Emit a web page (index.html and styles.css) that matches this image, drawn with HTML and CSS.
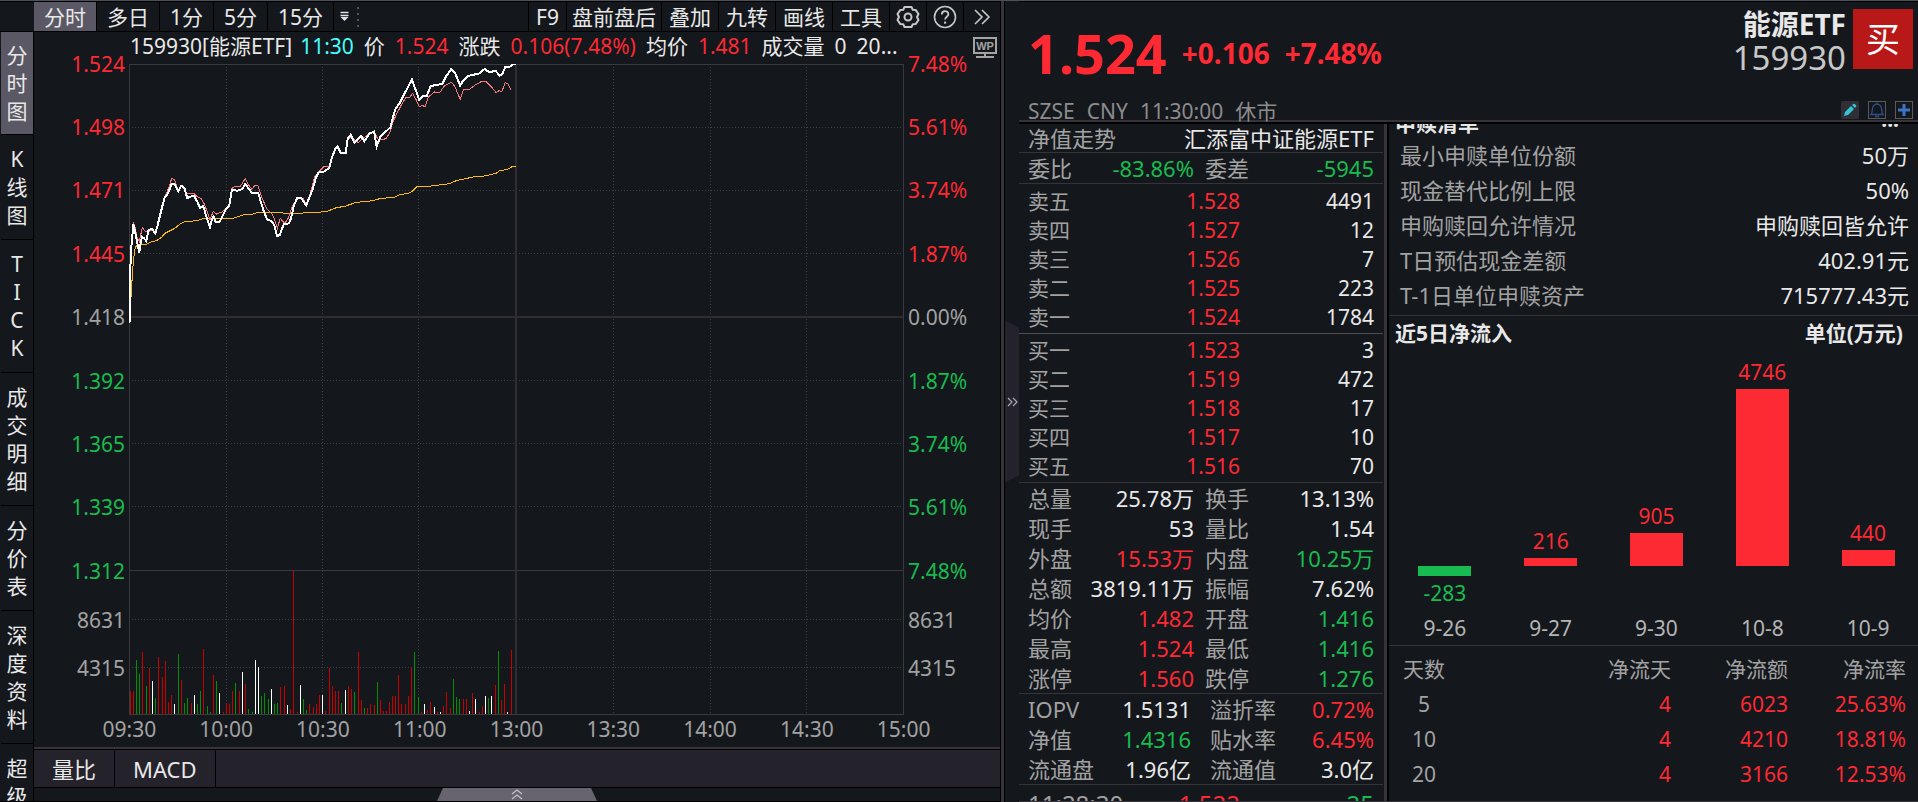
FILE: index.html
```html
<!DOCTYPE html>
<html lang="zh-CN">
<head>
<meta charset="utf-8">
<title>能源ETF 159930</title>
<link rel="stylesheet" href="styles.css">
</head>
<body>
<div class="app">
  <main class="chart-pane">
    <nav class="side-nav" aria-label="视图">
      <button class="side-tab active">分<br>时<br>图</button>
      <button class="side-tab">K<br>线<br>图</button>
      <button class="side-tab">T<br>I<br>C<br>K</button>
      <button class="side-tab">成<br>交<br>明<br>细</button>
      <button class="side-tab">分<br>价<br>表</button>
      <button class="side-tab">深<br>度<br>资<br>料</button>
      <button class="side-tab">超<br>级</button>
    </nav>
    <div class="toolbar">
      <button class="tool active">分时</button>
      <button class="tool">多日</button>
      <button class="tool">1分</button>
      <button class="tool">5分</button>
      <button class="tool">15分</button>
      <button class="tool-more" aria-label="更多周期">
        <svg width="14" height="20" viewBox="0 0 14 20"><path d="M2.500 5.500h8M2.500 8.500h8" stroke="#e2e2ee" stroke-width="1.500"/><path d="M2.500 10h8L6.500 14z" fill="#e2e2ee"/></svg>
        <svg width="4" height="22" viewBox="0 0 4 22"><path d="M2 1v21" stroke="#55565c" stroke-width="2" stroke-dasharray="2 4"/></svg>
      </button>
      <div class="tool-group">
        <button class="tool slim">F9</button>
        <button class="tool tight">盘前盘后</button>
        <button class="tool slim">叠加</button>
        <button class="tool slim">九转</button>
        <button class="tool slim">画线</button>
        <button class="tool slim">工具</button>
        <button class="tool icon" aria-label="设置">
          <svg width="24" height="24" viewBox="0 0 24 24" fill="none" stroke="#c8c8c8" stroke-width="2" stroke-linejoin="round"><path d="M8.500 2h7l1.300 2.800 3 .3L22.500 9 21 12l1.500 3-2.700 3.900-3 .3L15.500 22h-7l-1.300-2.800-3-.3L1.500 15 3 12 1.500 9l2.700-3.900 3-.3z"/><circle cx="12" cy="12" r="3.500"/></svg>
        </button>
        <button class="tool icon" aria-label="帮助">
          <svg width="24" height="24" viewBox="0 0 24 24" fill="none" stroke="#c8c8c8" stroke-width="1.600"><circle cx="12" cy="12" r="10.500"/><path d="M8.800 9.600c0-4.600 6.600-4.300 6.600-.4 0 2.400-3.300 2.700-3.300 5.300" stroke-width="1.800"/><path d="M12.100 16.500v2.200" stroke-width="2"/></svg>
        </button>
        <button class="tool icon last" aria-label="展开">
          <svg width="18" height="18" viewBox="0 0 18 18" fill="none" stroke="#c8c8c8" stroke-width="1.600"><path d="M2 2l7 7-7 7M9 2l7 7-7 7"/></svg>
        </button>
      </div>
    </div>

    <section class="chart">
      <div class="axis left">
        <span class="up">1.524</span><span class="up">1.498</span><span class="up">1.471</span><span class="up">1.445</span><span>1.418</span><span class="down">1.392</span><span class="down">1.365</span><span class="down">1.339</span><span class="down">1.312</span><span>8631</span><span>4315</span>
      </div>
      <div class="info">
        <span class="pair"><span>159930[能源ETF]</span><span class="clock">11:30</span></span>
        <span>价</span><span class="up">1.524</span><span>涨跌</span><span class="up">0.106(7.48%)</span><span>均价</span><span class="up">1.481</span><span>成交量</span><span>0</span><span>20...</span>
      </div>
      <svg class="plot" viewBox="27 42 2328 1953" preserveAspectRatio="none">
        <g class="dots">
          <path d="M27 232H2352M27 421H2352M27 610H2352M27 991H2352M27 1180H2352M27 1369H2352M27 1708H2352M27 1852H2352"/>
          <path d="M319 43V1992M607 43V1992M898 43V1992M1483 43V1992M1774 43V1992M2062 43V1992"/>
        </g>
        <path class="frame" d="M28 43H2353V1993H28ZM28 1561H2353"/>
        <path class="frame thick" d="M28 801H2353M1188 43V1993"/>
        <g class="bars" transform="translate(-360 1050)">
          <path class="b-up" d="M391 942V873M400 942V873M427 942V756M448 942V804M475 942V771M487 942V831M496 942V783M505 942V906M514 942V885M544 942V840M574 942V909M610 942V747M640 942V825M670 942V936M679 942V910M688 942V911M697 942V873M718 942V873M736 942V852M841 942V861M853 942V858M871 942V927M880 942V513M892 942V936M928 942V911M940 942V920M949 942V911M958 942V885M976 942V933M988 942V804M997 942V858M1006 942V873M1015 942V873M1045 942V858M1054 942V867M1075 942V756M1084 942V900M1102 942V924M1111 942V911M1123 942V915M1141 942V900M1150 942V933M1159 942V933M1171 942V906M1180 942V888M1189 942V888M1198 942V825M1207 942V911M1219 942V911M1228 942V888M1237 942V804M1267 942V936M1285 942V930M1294 942V906M1315 942V936M1333 942V918M1342 942V876M1354 942V924M1393 942V897M1402 942V897M1420 942V879M1441 942V936M1450 942V918M1489 942V855M1507 942V900M1516 942V852M1537 942V750"/>
          <path class="b-down" d="M409 942V780M418 942V822M439 942V858M466 942V894M535 942V762M553 942V909M562 942V894M592 942V912M601 942V873M622 942V918M631 942V936M649 942V843M706 942V849M745 942V927M757 942V936M784 942V888M793 942V879M805 942V897M823 942V912M832 942V909M910 942V897M919 942V930M1024 942V909M1063 942V876M1093 942V924M1132 942V846M1246 942V756M1258 942V891M1363 942V837M1372 942V891M1381 942V897M1468 942V894M1498 942V753"/>
          <path class="b-flat" d="M457 942V843M523 942V912M583 942V885M658 942V879M727 942V816M766 942V780M775 942V801M814 942V867M862 942V915M901 942V855M967 942V885M1036 942V870M1276 942V912M1306 942V921M1324 942V936M1411 942V933M1429 942V897M1459 942V888M1477 942V888M1525 942V936"/>
        </g>
        <g class="avg">
          <polyline points="33,742 38,660 44,600 50,585 78,583 95,575 110,572 125,562 135,550 165,535 180,522 195,515 230,512 250,506 340,505 375,493 400,492 415,487 480,487 495,490 545,490 560,487 605,486 620,485 650,473 675,469 710,457 760,452 780,446 825,441 840,434 865,430 878,424 892,409 925,409 990,401 1010,392 1070,379 1095,378 1130,370 1140,362 1165,358 1178,350 1188,349"/>
        </g>
        <g class="iopv">
          <polyline points="33,600 37,540 40,515 46,535 52,565 58,575 67,532 75,543 84,548 95,540 106,548 120,497 135,440 148,410 155,385 163,388 175,420 184,407 202,430 222,430 232,440 243,445 252,460 262,485 270,510 280,484 290,492 308,485 328,466 336,415 345,410 362,408 376,386 385,403 396,418 405,406 415,408 425,440 440,475 455,490 463,505 473,535 481,505 495,520 505,505 515,475 530,447 550,445 559,462 570,435 585,380 596,366 612,350 628,350 645,300 654,290 662,306 678,308 684,268 693,262 704,270 716,278 730,265 750,250 763,245 775,268 786,270 800,265 812,245 820,215 832,190 845,165 858,143 870,142 879,130 890,150 899,171 908,165 916,171 927,140 945,126 960,128 975,107 995,97 1005,108 1022,148 1032,118 1050,118 1070,103 1085,95 1100,95 1115,110 1130,128 1138,122 1147,125 1157,98 1165,102 1175,122"/>
        </g>
        <g class="price-line">
          <polyline points="27,816 29,815 30,690 33,600 37,560 40,522 45,545 50,570 58,608 62,580 66,560 72,565 79,573 86,540 96,537 106,550 112,530 120,497 128,465 135,440 142,434 148,420 155,402 163,401 175,425 184,407 193,413 202,444 212,440 222,437 232,455 240,474 250,468 258,495 270,531 275,512 281,500 287,515 299,515 308,497 318,478 328,468 336,420 352,422 368,417 376,402 384,412 396,428 415,428 425,462 432,485 442,508 452,512 463,524 472,558 480,555 492,522 508,520 515,500 522,468 532,444 544,444 552,455 559,466 568,445 578,420 588,385 596,368 612,365 628,355 636,325 646,298 654,290 662,308 678,310 684,265 693,254 704,278 712,270 724,258 734,273 750,250 763,245 771,289 782,260 812,232 822,195 828,175 840,160 855,130 877,89 899,150 910,139 922,137 933,108 968,102 980,78 995,57 1008,72 1022,107 1030,92 1045,78 1080,70 1095,57 1110,67 1128,62 1140,77 1148,73 1157,52 1170,50 1182,43 1188,43"/>
        </g>
      </svg>
      <div class="axis right">
        <span class="up">7.48%</span><span class="up">5.61%</span><span class="up">3.74%</span><span class="up">1.87%</span><span>0.00%</span><span class="down">1.87%</span><span class="down">3.74%</span><span class="down">5.61%</span><span class="down">7.48%</span><span>8631</span><span>4315</span>
      </div>
      <button class="wp" aria-label="WP">
        <svg width="26" height="24" viewBox="0 0 26 24"><path d="M2 2h22v15H2z" fill="none" stroke="#a4a4a4" stroke-width="2"/><path d="M12 17h2v3h-2zM4 20h18v2H4z" fill="#a4a4a4"/><text x="13" y="14" text-anchor="middle" class="wp-text">WP</text></svg>
      </button>
      <div class="times">
        <span>09:30</span><span>10:00</span><span>10:30</span><span>11:00</span><span>13:00</span><span>13:30</span><span>14:00</span><span>14:30</span><span>15:00</span>
      </div>
    </section>

    <div class="indicators">
      <button class="indicator">量比</button>
      <button class="indicator">MACD</button>
    </div>
    <div class="drawer">
      <button class="drawer-handle" aria-label="展开下方面板">
        <svg width="12" height="11" viewBox="0 0 12 11" fill="none" stroke="#c4c2cc" stroke-width="1.200"><path d="M1 5l5-4 5 4M1 10l5-4 5 4"/></svg>
      </button>
    </div>
  </main>

  <div class="splitter"></div>
  <div class="gutter">
    <button class="gutter-handle" aria-label="收起右侧面板">
      <svg width="11" height="10" viewBox="0 0 11 10" fill="none" stroke="#a9a9ae" stroke-width="1.200"><path d="M1 1l4 4-4 4M6 1l4 4-4 4"/></svg>
    </button>
  </div>

  <aside class="info-pane">
    <header class="quote-head">
      <div class="quote-main">
        <div class="quote-price"><strong class="last">1.524</strong><strong class="chg">+0.106</strong><strong class="chg">+7.48%</strong></div>
        <div class="quote-meta"><span>SZSE</span><span>CNY</span><span>11:30:00</span><span>休市</span></div>
      </div>
      <div class="quote-side">
        <div class="ident">
          <div class="names"><h1 class="name">能源ETF</h1><span class="code">159930</span></div>
          <button class="buy">买</button>
        </div>
        <div class="actions">
          <button class="act filled" aria-label="编辑"><svg width="18" height="18" viewBox="0 0 18 18"><path d="M3 15l1-4 6-6 3 3-6 6zM11 4l1.500-1.200 1.200.2 1.500 1.600v1L14 7z" fill="#35c3d6"/></svg></button>
          <button class="act" aria-label="提醒"><svg width="18" height="18" viewBox="0 0 18 18" fill="none" stroke="#2f4f8a" stroke-width="1.300"><path d="M9 1.500v1.500M3 13.500c1.500-1.500 1-4 1.500-6C5 4.700 7 3.200 9 3.200s4 1.500 4.500 4.300c.5 2 0 4.500 1.500 6zM7 15.500h4"/></svg></button>
          <button class="act" aria-label="添加"><svg width="18" height="18" viewBox="0 0 18 18"><path d="M9 3v12M3 9h12" stroke="#3d72c4" stroke-width="3"/></svg></button>
        </div>
      </div>
    </header>

    <div class="columns">
      <section class="book">
        <div class="fund"><span class="muted">净值走势</span><span>汇添富中证能源ETF</span></div>
        <div class="stats ruled"><span>委比</span><b class="down">-83.86%</b><span>委差</span><b class="down">-5945</b></div>
        <table class="depth asks">
          <tr><th>卖五</th><td class="up">1.528</td><td>4491</td></tr>
          <tr><th>卖四</th><td class="up">1.527</td><td>12</td></tr>
          <tr><th>卖三</th><td class="up">1.526</td><td>7</td></tr>
          <tr><th>卖二</th><td class="up">1.525</td><td>223</td></tr>
          <tr><th>卖一</th><td class="up">1.524</td><td>1784</td></tr>
        </table>
        <table class="depth bids">
          <tr><th>买一</th><td class="up">1.523</td><td>3</td></tr>
          <tr><th>买二</th><td class="up">1.519</td><td>472</td></tr>
          <tr><th>买三</th><td class="up">1.518</td><td>17</td></tr>
          <tr><th>买四</th><td class="up">1.517</td><td>10</td></tr>
          <tr><th>买五</th><td class="up">1.516</td><td>70</td></tr>
        </table>
        <div class="stats ruled">
          <span>总量</span><b>25.78万</b><span>换手</span><b>13.13%</b>
          <span>现手</span><b>53</b><span>量比</span><b>1.54</b>
          <span>外盘</span><b class="up">15.53万</b><span>内盘</span><b class="down">10.25万</b>
          <span>总额</span><b>3819.11万</b><span>振幅</span><b>7.62%</b>
          <span>均价</span><b class="up">1.482</b><span>开盘</span><b class="down">1.416</b>
          <span>最高</span><b class="up">1.524</b><span>最低</span><b class="down">1.416</b>
          <span>涨停</span><b class="up">1.560</b><span>跌停</span><b class="down">1.276</b>
        </div>
        <div class="stats ruled wide">
          <span>IOPV</span><b>1.5131</b><span>溢折率</span><b class="up">0.72%</b>
          <span>净值</span><b class="down">1.4316</b><span>贴水率</span><b class="up">6.45%</b>
          <span>流通盘</span><b>1.96亿</b><span>流通值</span><b>3.0亿</b>
        </div>
        <div class="tick"><span class="muted">11:28:30</span><span class="up">1.522</span><span class="down">25</span></div>
      </section>

      <section class="etf">
        <div class="list-title"><h2>申赎清单</h2><span class="more">...</span></div>
        <dl class="list">
          <div><dt>最小申赎单位份额</dt><dd>50万</dd></div>
          <div><dt>现金替代比例上限</dt><dd>50%</dd></div>
          <div><dt>申购赎回允许情况</dt><dd>申购赎回皆允许</dd></div>
          <div><dt>T日预估现金差额</dt><dd>402.91元</dd></div>
          <div><dt>T-1日单位申赎资产</dt><dd>715777.43元</dd></div>
        </dl>
        <div class="flow-title"><h2>近5日净流入</h2><span>单位(万元)</span></div>
        <div class="flow">
          <div class="day"><div class="pos"></div><div class="neg"><i style="height:10px"></i><span>-283</span></div><em>9-26</em></div>
          <div class="day"><div class="pos"><span>216</span><i style="height:8px"></i></div><div class="neg"></div><em>9-27</em></div>
          <div class="day"><div class="pos"><span>905</span><i style="height:33px"></i></div><div class="neg"></div><em>9-30</em></div>
          <div class="day"><div class="pos"><span>4746</span><i style="height:177px"></i></div><div class="neg"></div><em>10-8</em></div>
          <div class="day"><div class="pos"><span>440</span><i style="height:16px"></i></div><div class="neg"></div><em>10-9</em></div>
        </div>
        <table class="net">
          <thead><tr><th>天数</th><th>净流天</th><th>净流额</th><th>净流率</th></tr></thead>
          <tbody>
            <tr><td>5</td><td>4</td><td>6023</td><td>25.63%</td></tr>
            <tr><td>10</td><td>4</td><td>4210</td><td>18.81%</td></tr>
            <tr><td>20</td><td>4</td><td>3166</td><td>12.53%</td></tr>
            <tr><td>60</td><td>16</td><td class="down">-1448</td><td class="down">-1.48%</td></tr>
          </tbody>
        </table>
      </section>
    </div>
  </aside>
</div>
</body>
</html>
```
FILE: styles.css
```css
:root {
  --bg: #14171c;
  --panel: #24222a;
  --line: #36343a;
  --rule: #333338;
  --up: #fd2933;
  --down: #18bb4f;
  --text: #e8e8e8;
  --muted: #a2a2a2;
}

* { box-sizing: border-box; }

body {
  margin: 0;
  background: var(--bg);
  color: var(--text);
  font-family: "Noto Sans", "Noto Sans CJK SC", sans-serif;
  font-size: 21px;
  line-height: 28px;
}

button {
  margin: 0;
  padding: 0;
  border: 0;
  background: none;
  color: inherit;
  font: inherit;
  cursor: pointer;
}

h1, h2, dl, dd { margin: 0; }
svg { display: block; }
table { border-collapse: collapse; width: 100%; }
th, td { padding: 0; font-weight: 400; text-align: right; }
.up { color: var(--up); }
.down { color: var(--down); }
.muted { color: var(--muted); }

.app {
  display: grid;
  grid-template-columns: 1001fr 4px 14px 899fr;
  height: 100vh;
  overflow: hidden;
  border-top: 1px solid #4b505c;
}

/* chart pane */
.chart-pane {
  display: grid;
  grid-template: 30px minmax(0, 1fr) 39px 13px / 34px minmax(0, 1fr);
  min-width: 0;
  min-height: 0;
  border-right: 1px solid #000;
  border-top: 1px solid #000;
  border-bottom: 1px solid #000;
}

.side-nav {
  grid-row: 2 / -1;
  display: flex;
  flex-direction: column;
  min-height: 0;
  overflow: hidden;
  margin-left: 1px;
  border-right: 1px solid #000;
}
.side-tab {
  flex: none;
  padding: 10px 0;
  border-bottom: 1px solid #000;
}
.side-tab.active { padding: 9px 0; background: #5b5865; }

.toolbar {
  grid-column: 1 / -1;
  display: flex;
  padding-left: 34px;
  border-bottom: 1px solid #000;
}
.tool {
  padding: 0 10px;
  border-right: 1px solid #000;
  white-space: nowrap;
}
.tool.active { background: #5b5865; }
.tool.slim { padding: 0 7px; }
.tool.tight { padding: 0 5px; }
.tool.icon { display: flex; align-items: center; padding: 0 6px; }
.tool.icon.last { padding: 0 9px; border-right: 0; }
.tool-more { display: flex; align-items: center; gap: 4px; padding-left: 4px; }
.tool-group { display: flex; margin-left: auto; border-left: 1px solid #000; }

.chart {
  display: grid;
  grid-template: 32px minmax(0, 1fr) 32px / 95px minmax(0, 1fr) 68px 28px;
  min-height: 0;
  border-bottom: 2px solid var(--line);
}
.axis {
  grid-row: 1 / 3;
  display: grid;
  grid-template-rows: repeat(9, 1265fr) 720fr 1200fr 330fr;
  align-items: center;
  color: var(--muted);
}
.axis.left { grid-column: 1; text-align: right; padding-right: 4px; }
.axis.right { grid-column: 3; padding-left: 4px; }
.axis .up { color: var(--up); }
.axis .down { color: var(--down); }
.info {
  grid-area: 1 / 2;
  display: flex;
  gap: 10px;
  padding-left: 1px;
  white-space: nowrap;
}
.pair { display: flex; gap: 8px; }
.clock { color: #45ffff; }
.plot { grid-area: 2 / 2; width: 100%; height: 100%; }
.plot * { vector-effect: non-scaling-stroke; fill: none; shape-rendering: crispEdges; }
.dots path { stroke: #3c3e43; stroke-width: 1; stroke-dasharray: 1 2; }
.frame { stroke: #3a393e; stroke-width: 1; }
.frame.thick { stroke: #2f2d32; stroke-width: 2; }
.b-up { stroke: #c80000; }
.b-down { stroke: #009000; }
.b-flat { stroke: #fff; }
.avg polyline { stroke: #fdb913; }
.iopv polyline { stroke: #f27c7c; }
.price-line polyline { stroke: #fff; stroke-width: 2; }
.wp { grid-area: 1 / 4; align-self: center; }
.wp-text { font: 700 11px "Liberation Sans", sans-serif; fill: #a4a4a4; }
.times {
  grid-area: 3 / 2;
  display: grid;
  grid-template-columns: repeat(9, 1fr);
  margin: 0 -48px;
  text-align: center;
  color: var(--muted);
}

.indicators {
  display: flex;
  background: var(--panel);
  border-top: 1px solid #000;
  border-bottom: 1px solid #000;
  font-size: 22px;
}
.indicator { padding: 0 18px; border-right: 1px solid #000; }
.drawer { display: flex; justify-content: center; }
.drawer-handle {
  display: flex;
  justify-content: center;
  align-items: center;
  width: 160px;
  background: #67646f;
  clip-path: polygon(6px 0, 154px 0, 100% 100%, 0 100%);
}

.splitter { background: var(--line); border-right: 1px solid #000; }
.gutter { display: flex; align-items: center; }
.gutter-handle {
  display: flex;
  justify-content: center;
  align-items: center;
  width: 14px;
  height: 162px;
  background: var(--panel);
  clip-path: polygon(0 0, 100% 7px, 100% 155px, 0 100%);
}

/* quote header */
.info-pane {
  display: flex;
  flex-direction: column;
  min-width: 0;
  min-height: 0;
}
.quote-head {
  flex: none;
  display: flex;
  justify-content: space-between;
  height: 123px;
  overflow: hidden;
  border-top: 1px solid #000;
  border-bottom: 2px solid #000;
  box-shadow: inset 0 -2px 0 var(--line);
  padding: 7px 5px 0 9px;
}
.quote-price {
  display: flex;
  align-items: center;
  gap: 15px;
  height: 88px;
  color: var(--up);
}
.last { font-size: 54px; line-height: 88px; }
.chg { font-size: 28px; }
.quote-meta { display: flex; gap: 12px; color: #8c8c8c; }
.ident { display: flex; gap: 7px; }
.names { text-align: right; }
.name { font-size: 28px; line-height: 30px; }
.code { display: block; font-size: 33px; line-height: 38px; color: #c8c8c8; }
.buy {
  width: 60px;
  height: 60px;
  background: #b91818;
  color: #fff;
  font-size: 34px;
}
.actions { display: flex; justify-content: flex-end; gap: 9px; margin-top: 24px; }
.act { width: 18px; height: 18px; box-shadow: inset 0 0 0 1px #5c5a58; }
.act.filled { background: #302e36; box-shadow: none; border-radius: 2px; }

.columns {
  flex: 1;
  display: grid;
  grid-template-columns: 370fr 529fr;
  min-height: 0;
  border-bottom: 1px solid var(--line);
}

/* order book */
.book {
  min-width: 0;
  overflow: hidden;
  border-right: 2px solid #000;
  box-shadow: inset -3px 0 0 var(--line);
  padding-right: 4px;
}
.fund {
  display: flex;
  justify-content: space-between;
  height: 29px;
  padding: 0 9px;
  border-bottom: 1px solid var(--rule);
  font-size: 22px;
}
.stats {
  display: grid;
  grid-template-columns: 45px 121px 56px minmax(0, 1fr);
  grid-auto-rows: 30px;
  align-items: center;
  padding: 0 9px;
  font-size: 22px;
}
.stats span { color: var(--muted); white-space: nowrap; }
.stats b { font-weight: 400; text-align: right; white-space: nowrap; }
.stats span:nth-child(4n + 3) { padding-left: 11px; }
.stats.wide { grid-template-columns: 66px 97px 86px minmax(0, 1fr); }
.stats.wide span:nth-child(4n + 3) { padding-left: 19px; }
.ruled { border-bottom: 1px solid var(--rule); }
.depth { display: block; padding: 3px 9px 1px; border-bottom: 1px solid #4c4c52; }
.depth tbody { display: block; }
.depth tr { display: grid; grid-template-columns: 1fr 112px 134px; height: 29px; }
.depth th { text-align: left; color: var(--muted); }
.bids { padding: 2px 9px 1px; border-color: var(--rule); }
.tick {
  display: grid;
  grid-template-columns: 100px 112px 1fr;
  padding: 0 9px;
  font-size: 24px;
  line-height: 38px;
  text-align: right;
}
.tick .muted { text-align: left; }

/* ETF panel */
.etf { min-width: 0; overflow: hidden; }
.etf h2 { font-size: 21px; line-height: 30px; }
.list-title {
  display: flex;
  justify-content: space-between;
  align-items: flex-end;
  height: 14px;
  overflow: hidden;
  padding: 0 19px 0 6px;
}
.more { font-weight: 700; line-height: 38px; }
.list {
  padding: 0 9px 2px 11px;
  border-bottom: 1px solid var(--rule);
  font-size: 22px;
  line-height: 35px;
}
.list div { display: flex; justify-content: space-between; }
.list dt { color: var(--muted); }
.flow-title {
  display: flex;
  justify-content: space-between;
  padding: 2px 15px 4px 6px;
  font-weight: 700;
  line-height: 30px;
}
.flow {
  display: grid;
  grid-template-columns: repeat(5, 1fr);
  margin-right: -3px;
  padding-left: 3px;
  border-bottom: 1px solid var(--rule);
}
.day { display: grid; grid-template-rows: 214px 45px 34px; text-align: center; }
.day i { display: block; width: 50%; }
.day em { font-style: normal; line-height: 34px; color: #b4b4b4; }
.pos, .neg { display: flex; flex-direction: column; align-items: center; color: var(--up); }
.pos { justify-content: flex-end; }
.pos span, .neg span { line-height: 34px; }
.pos i { background: var(--up); }
.neg { color: var(--down); }
.neg i { background: var(--down); }
.net { table-layout: fixed; margin-top: 5px; color: var(--up); }
.net tr { height: 35px; }
.net th, .net td:first-child { color: var(--muted); }
.net th:first-child, .net td:first-child { width: 70px; text-align: center; }
.net th:nth-child(3) { width: 117px; }
.net th:nth-child(4) { width: 130px; }
.net th:nth-child(4), .net td:nth-child(4) { padding-right: 12px; }
```
